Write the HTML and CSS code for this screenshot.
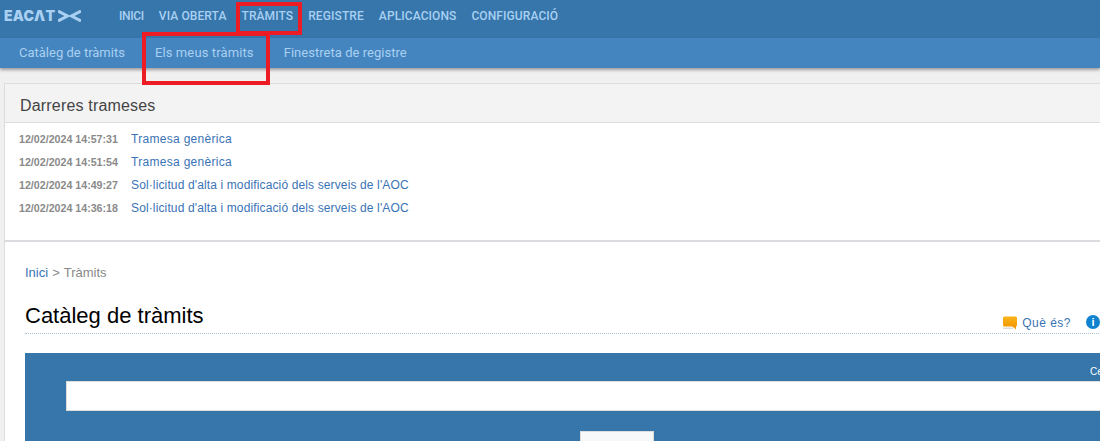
FILE: index.html
```html
<!DOCTYPE html>
<html lang="ca">
<head>
<meta charset="utf-8">
<title>Catàleg de tràmits</title>
<link rel="stylesheet" href="styles.css">
</head>
<body>
<header class="topbar">
  <a class="logo" href="#"><span class="logo-text">EACΛT</span><svg class="logo-mark" width="23" height="12" viewBox="0 0 23 12"><path d="M0 1 L9.5 6 L0 11" fill="none" stroke="#a9d0f2" stroke-width="3"/><path d="M23 1 L13.5 6 L23 11" fill="none" stroke="#a9d0f2" stroke-width="3"/></svg></a>
  <nav class="mainnav">
    <a href="#">Inici</a>
    <a href="#">Via Oberta</a>
    <a href="#">Tràmits</a>
    <a href="#">Registre</a>
    <a href="#">Aplicacions</a>
    <a href="#">Configuració</a>
  </nav>
</header>
<nav class="subnav">
  <a href="#">Catàleg de tràmits</a>
  <a href="#">Els meus tràmits</a>
  <a class="last" href="#">Finestreta de registre</a>
</nav>
<div class="mark mark-top"></div>
<div class="mark mark-sub"></div>
<main class="page">
  <section class="panel">
    <h2 class="panel-title">Darreres trameses</h2>
    <ul class="sends">
      <li><time>12/02/2024 14:57:31</time><a class="short" href="#">Tramesa genèrica</a></li>
      <li><time>12/02/2024 14:51:54</time><a class="short" href="#">Tramesa genèrica</a></li>
      <li><time>12/02/2024 14:49:27</time><a href="#">Sol·licitud d'alta i modificació dels serveis de l'AOC</a></li>
      <li><time>12/02/2024 14:36:18</time><a href="#">Sol·licitud d'alta i modificació dels serveis de l'AOC</a></li>
    </ul>
    <div class="content">
      <p class="crumbs"><a href="#">Inici</a> &gt; Tràmits</p>
      <div class="title-row">
        <h1>Catàleg de tràmits</h1>
        <div class="helps">
          <a href="#"><svg width="14" height="14" viewBox="0 0 14 14"><defs><linearGradient id="bubble" x1="0" y1="0" x2="0" y2="1"><stop offset="0" stop-color="#fbb41a"/><stop offset="1" stop-color="#f29a05"/></linearGradient></defs><rect x="0" y="0.5" width="14" height="10" rx="1.5" fill="url(#bubble)"/><path d="M9 10 L13 13.5 L13 10 Z" fill="#f29a05"/><rect x="0" y="11.5" width="10" height="1.5" fill="#ddd"/></svg>Què és?</a>
          <span class="info">i</span>
        </div>
      </div>
      <div class="search">
        <div class="search-label">Cercar</div>
        <div class="search-input"></div>
        <div class="search-btn"></div>
      </div>
    </div>
  </section>
</main>
</body>
</html>
```
FILE: styles.css
```css
* { box-sizing: border-box; }
html, body { margin: 0; height: 441px; overflow: hidden; }
body { background: #f0f0f0; font-family: "Liberation Sans", Arial, sans-serif; position: relative; width: 1100px; }
a { text-decoration: none; }
.topbar { height: 38px; background: #3676ab; display: flex; align-items: center; padding-left: 4px; }
.logo { display: flex; align-items: center; width: 115px; gap: 0; margin-top: -6px; }
.logo-text { width: 54px; font: 900 14px/16px Inter, sans-serif; color: #a9d0f2; letter-spacing: .2px; white-space: nowrap; }
.mainnav { display: flex; gap: 15px; margin-top: -6px; }
.mainnav a { font: 500 12px/16px Roboto, sans-serif; text-transform: uppercase; color: #a9d0f2; letter-spacing: .1px; }
.mainnav a:first-child { letter-spacing: -.35px; }
.subnav { height: 30px; background: #4585bf; display: flex; gap: 30px; padding: 0 19px; align-items: center; box-shadow: 0 2px 3px rgba(0,0,0,.35); position: relative; }
.subnav a { font: 400 13px/16px Roboto, sans-serif; color: #a9d0f2; letter-spacing: .12px; }
.subnav a:first-child { letter-spacing: 0; }
.subnav a.last { letter-spacing: .03px; }
.mark { position: absolute; border: 4px solid #ed1c24; }
.mark-top { left: 236px; top: 2px; width: 66px; height: 33px; }
.mark-sub { left: 142px; top: 32px; width: 128px; height: 53px; }
.page { padding: 15px 0 0 4px; width: 1220px; }
.panel { background: #fff; border: 1px solid #dcdcdc; }
.panel-title { margin: 0; height: 39px; padding-left: 15px; background: #f3f3f3; border-bottom: 1px solid #dcdcdc; font: 400 16px/43px "Liberation Sans", sans-serif; color: #444; letter-spacing: .18px; }
.sends { list-style: none; margin: 0; padding: 4px 0 0 14px; height: 119px; border-bottom: 2px solid #dcdce0; }
.sends li { display: flex; height: 23px; align-items: center; }
.sends time { width: 112px; font: 700 10.67px/14px "Liberation Sans", sans-serif; color: #8a8a8a; }
.sends a { font: 400 12px/14px "Liberation Sans", sans-serif; color: #3a73b5; letter-spacing: .13px; }
.sends a.short { letter-spacing: .3px; }
.content { padding: 22px 0 0 20px; }
.crumbs { margin: 0; font: 400 13px/18px "Liberation Sans", sans-serif; color: #888; word-spacing: .5px; }
.crumbs a { color: #3a73b5; }
.title-row { display: flex; justify-content: space-between; align-items: flex-end; margin-top: 19px; width: 1190px; height: 33px; border-bottom: 1px dotted #a9c4d4; padding-right: 115px; }
h1 { margin: 0 0 3px; font: 400 22px/29px "Liberation Sans", sans-serif; color: #000; }
.helps { display: flex; align-items: center; gap: 15px; height: 24px; margin-bottom: -2px; }
.helps a { display: flex; align-items: center; gap: 5px; font: 400 12px/16px "Liberation Sans", sans-serif; color: #3a73b5; letter-spacing: .5px; }
.info { width: 14px; height: 14px; border-radius: 50%; background: #1083d0; color: #fff; font: 700 11px/14px "Liberation Sans", sans-serif; text-align: center; margin-top: -2px; }
.search { margin-top: 19px; height: 120px; width: 1190px; background: #3676ab; padding-left: 41px; position: relative; }
.search-label { height: 28px; padding: 12px 0 0 1024px; font: 400 10px/14px "Liberation Sans", sans-serif; color: #fff; }
.search-input { height: 30px; background: #fff; border: 1px solid #ddd; }
.search-btn { width: 74px; height: 40px; margin: 20px 0 0 514px; background: #f7f8f9; border: 1px solid #ddd; }
```
